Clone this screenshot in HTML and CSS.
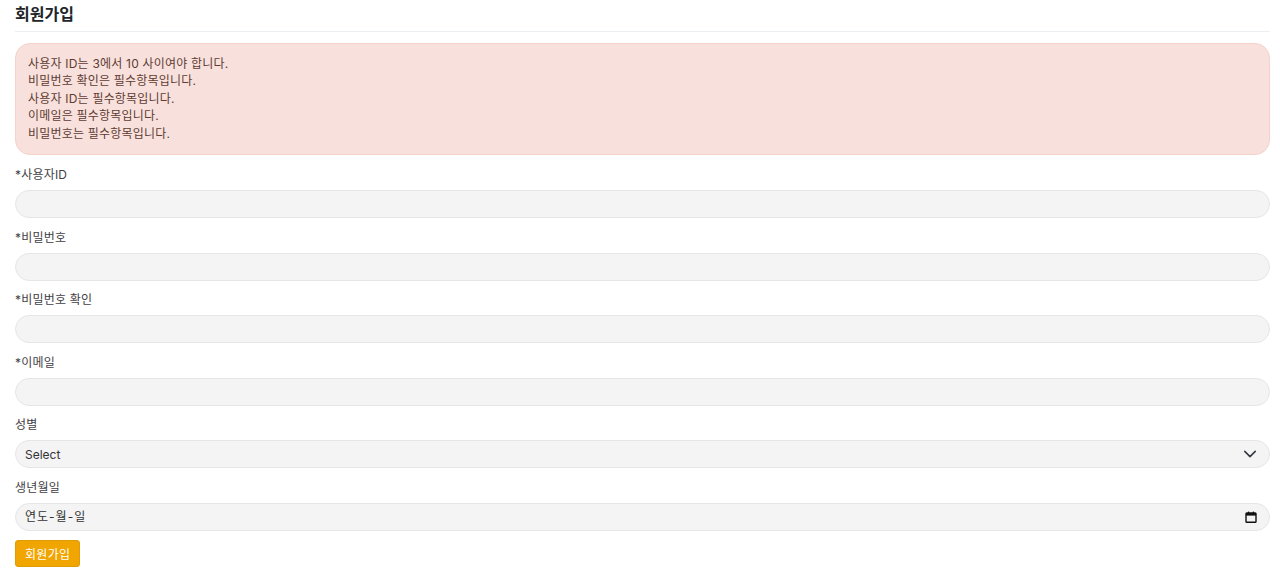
FILE: index.html
```html
<!DOCTYPE html>
<html lang="ko">
<head>
    <meta charset="UTF-8">
    <meta name="viewport" content="width=device-width, initial-scale=1.0">
    <title>회원가입</title>
    <link rel="stylesheet" href="styles.css">
</head>
<body>

    <div class="page">
        <h1 class="title">회원가입</h1>

        <div class="alert">
            <div>사용자 ID는 3에서 10 사이여야 합니다.</div>
            <div>비밀번호 확인은 필수항목입니다.</div>
            <div>사용자 ID는 필수항목입니다.</div>
            <div>이메일은 필수항목입니다.</div>
            <div>비밀번호는 필수항목입니다.</div>
        </div>

        <form class="signup-form">
            <div class="field">
                <label for="userId">*사용자ID</label>
                <input type="text" id="userId">
            </div>
            <div class="field">
                <label for="password1">*비밀번호</label>
                <input type="password" id="password1">
            </div>
            <div class="field">
                <label for="password2">*비밀번호 확인</label>
                <input type="password" id="password2">
            </div>
            <div class="field">
                <label for="email">*이메일</label>
                <input type="email" id="email">
            </div>
            <div class="field">
                <label for="gender">성별</label>
                <div class="control">
                    <select id="gender">
                        <option>Select</option>
                        <option>남</option>
                        <option>여</option>
                    </select>
                    <svg class="control-icon" width="14" height="14" viewBox="0 0 16 16">
                        <path d="M2 5l6 6 6-6" fill="none" stroke="#343a40" stroke-width="1.8" stroke-linecap="round" stroke-linejoin="round"/>
                    </svg>
                </div>
            </div>
            <div class="field">
                <label for="birth">생년월일</label>
                <div class="control">
                    <input type="text" id="birth" class="date-input" placeholder="연도-월-일">
                    <svg class="control-icon" width="12" height="12" viewBox="0 0 12 12">
                        <rect x="1" y="2" width="10" height="9.2" rx="0.8" fill="none" stroke="#111" stroke-width="1.4"/>
                        <rect x="1" y="2" width="10" height="2.6" fill="#111"/>
                        <rect x="3" y="0.6" width="1.2" height="2" fill="#111"/>
                        <rect x="7.8" y="0.6" width="1.2" height="2" fill="#111"/>
                    </svg>
                </div>
            </div>
            <div class="actions">
                <button type="submit">회원가입</button>
            </div>
        </form>
    </div>

</body>
</html>
```

FILE: styles.css
```css
/* General Styles */
body {
    font-family: 'Inter', 'Noto Sans CJK KR', sans-serif;
    background-color: #fff;
    color: #212529;
    margin: 0;
    padding: 0;
}

.page {
    padding: 4px 10px 0 15px;
}

.title {
    margin: 0;
    padding-bottom: 6px;
    font-size: 16px;
    font-weight: 700;
    line-height: 21px;
    border-bottom: 1px solid #eceff1;
}

/* Error box */
.alert {
    margin-top: 11px;
    padding: 11px 12px 12px;
    background-color: #f8e1dc;
    border: 1px solid #f4d2ca;
    border-radius: 15px;
    color: #5e3b33;
    font-size: 12px;
    letter-spacing: 0.2px;
    line-height: 17.4px;
}

/* Form */
.signup-form {
    display: flex;
    flex-direction: column;
    gap: 10.5px;
    margin-top: 11px;
}

.field {
    display: flex;
    flex-direction: column;
    gap: 6px;
}

.field label {
    font-size: 12px;
    letter-spacing: 0.2px;
    line-height: 18px;
    color: #3f3f46;
}

.field input,
.field select {
    box-sizing: border-box;
    width: 100%;
    height: 28px;
    padding: 0 9px;
    background-color: #f4f4f4;
    border: 1px solid #e6e6e6;
    border-radius: 14px;
    font-family: inherit;
    font-size: 12px;
    color: #333;
    outline: none;
}

.field select {
    appearance: none;
    -webkit-appearance: none;
}

.date-input {
    letter-spacing: 1px;
}

.field input::placeholder {
    color: #333;
}

.control {
    position: relative;
}

.control-icon {
    position: absolute;
    right: 13px;
    top: 50%;
    transform: translateY(-50%);
    pointer-events: none;
}

.actions {
    margin-top: -1px;
}

button {
    height: 27px;
    padding: 0 9px;
    background-color: #f0a500;
    color: #fff;
    border: 1px solid #e09c05;
    border-radius: 3px;
    font-family: inherit;
    font-size: 12px;
    letter-spacing: 0.3px;
    cursor: pointer;
}
```
